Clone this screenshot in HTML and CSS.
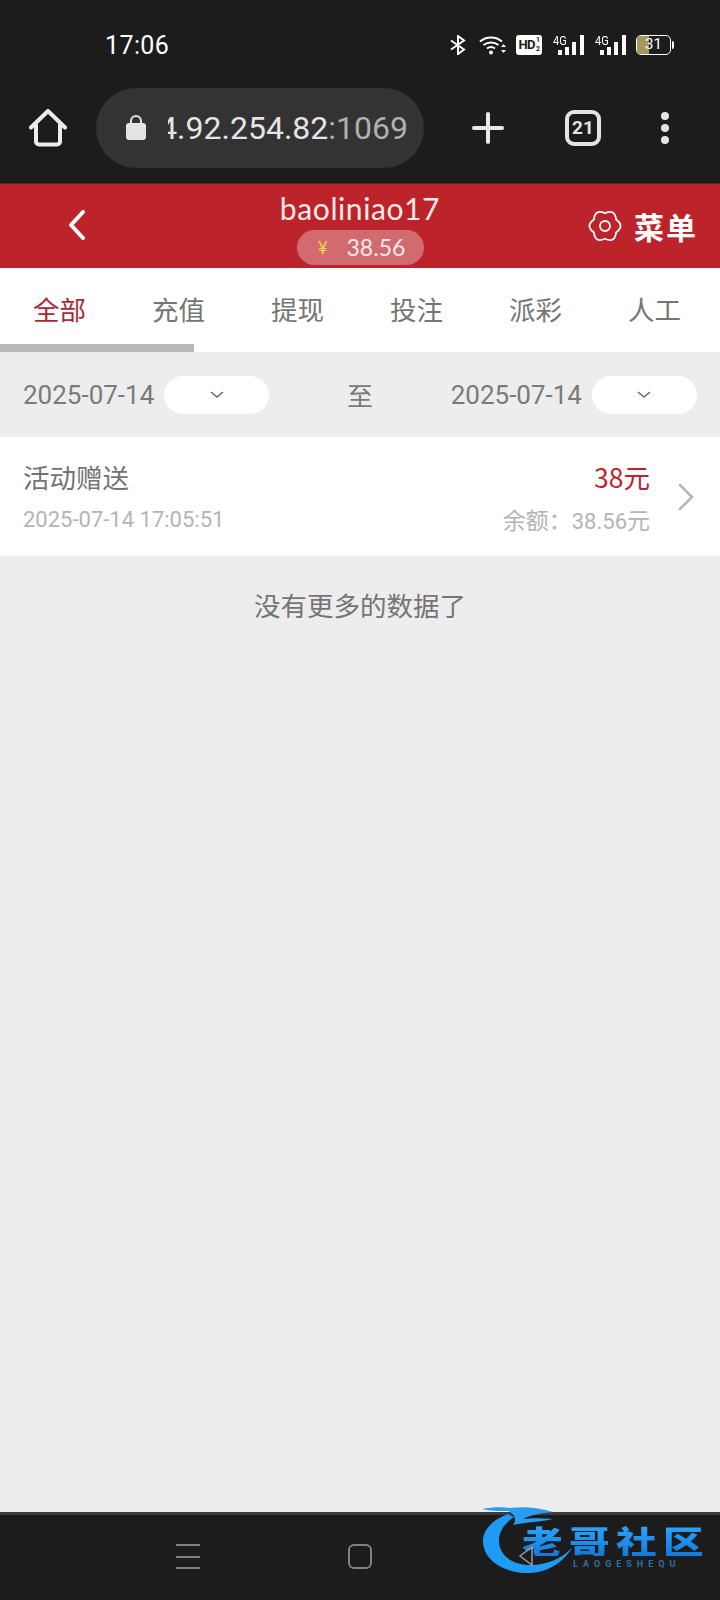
FILE: index.html
```html
<!DOCTYPE html>
<html lang="zh">
<head>
<meta charset="utf-8">
<title>账变记录</title>
<link rel="stylesheet" href="styles.css">
</head>
<body>
<div class="screen">
  <div class="chrome">
    <div class="status">
      <span class="clock">17:06</span>
      <div class="status-icons">
        <svg class="ic" width="16" height="20" viewBox="0 0 16 20" fill="none" stroke="#fff" stroke-width="2"><path d="M1 5.500 14 14.500 8 19V1l6 4.500L1 14.500"/></svg>
        <svg class="ic wifi" width="27" height="20" viewBox="0 0 27 20" fill="none" stroke="#fff" stroke-width="2"><path d="M1 6.500C7 1 17 1 23 6.500M4.500 10C9 6.500 15 6.500 19.500 10M8 13.500c2.500-1.800 5.500-1.800 8 0"/><circle cx="12" cy="17.500" r="2" fill="#fff" stroke="none"/><path d="m22 12 2.500-3 2.500 3zm0 3h5l-2.500 3z" fill="#fff" stroke="none"/></svg>
        <div class="hd"><span>HD</span><span class="hd-frac">1<br>2</span></div>
        <div class="sig"><span class="sig-t">4G</span><i class="b1"></i><i class="b2"></i><i class="b3"></i><i class="b4"></i></div>
        <div class="sig"><span class="sig-t">4G</span><i class="b1"></i><i class="b2"></i><i class="b3"></i><i class="b4"></i></div>
        <div class="batt"><div class="batt-body"><div class="batt-fill"></div><span class="batt-num">31</span></div><div class="batt-cap"></div></div>
      </div>
    </div>
    <div class="toolbar">
      <svg class="home" width="38" height="38" viewBox="0 0 38 38" fill="none" stroke="#ececec" stroke-width="4" stroke-linejoin="round" stroke-linecap="round"><path d="M2 18.500 19 2l17 16.500M7 16v16.500a3 3 0 0 0 3 3h18a3 3 0 0 0 3-3V16"/></svg>
      <div class="url">
        <svg width="20" height="28" viewBox="0 0 20 28"><path d="M5 11V7a5 5 0 0 1 10 0v4" fill="none" stroke="#e4e4e4" stroke-width="2"/><rect y="9" width="20" height="17" rx="3" fill="#e4e4e4"/></svg>
        <div class="url-clip"><span class="url-text"><span class="url-host">114.92.254.82</span>:1069</span></div>
      </div>
      <svg class="plus" width="32" height="32" viewBox="0 0 32 32" stroke="#e8e8e8" stroke-width="4" stroke-linecap="round"><path d="M16 2v28M2 16h28"/></svg>
      <div class="tabs-count">21</div>
      <div class="dots"><i></i><i></i><i></i></div>
    </div>
  </div>

  <header class="head">
    <svg class="back" width="18" height="30" viewBox="0 0 18 30" fill="none" stroke="#fff" stroke-width="4" stroke-linecap="round" stroke-linejoin="round"><path d="M15 2 3 15l12 13"/></svg>
    <div class="who">
      <div class="name">baoliniao17</div>
      <div class="money"><span class="yen">¥</span><span>38.56</span></div>
    </div>
    <div class="menu">
      <svg class="gear" width="32" height="32" viewBox="0 0 32 32" fill="none" stroke="#fff" stroke-width="1.800"><path d="M16 3.200Q26-1.320 27.080 9.600 36 16 27.080 22.400 26 33.320 16 28.800 6 33.320 4.920 22.400-4 16 4.920 9.600 6-1.320 16 3.200z"/><circle cx="16" cy="16" r="5"/></svg>
      <span>菜单</span>
    </div>
  </header>

  <nav class="tabs">
    <a class="tab on">全部</a>
    <a class="tab">充值</a>
    <a class="tab">提现</a>
    <a class="tab">投注</a>
    <a class="tab">派彩</a>
    <a class="tab">人工</a>
    <div class="tab-line"></div>
  </nav>

  <div class="filter">
    <div class="date"><span>2025-07-14</span><div class="pick"><svg width="14" height="8" viewBox="0 0 14 8" fill="none" stroke="#666" stroke-width="1.500"><path d="m1 1 6 5 6-5"/></svg></div></div>
    <span class="to">至</span>
    <div class="date"><span>2025-07-14</span><div class="pick"><svg width="14" height="8" viewBox="0 0 14 8" fill="none" stroke="#666" stroke-width="1.500"><path d="m1 1 6 5 6-5"/></svg></div></div>
  </div>

  <div class="row">
    <div class="row-main">
      <div class="line"><span class="title">活动赠送</span><span class="amount">38元</span></div>
      <div class="line"><span class="stamp">2025-07-14 17:05:51</span><span class="balance">余额：<b class="digits">38.56</b>元</span></div>
    </div>
    <svg class="chev" width="16" height="28" viewBox="0 0 16 28" fill="none" stroke="#b5b5b5" stroke-width="2.500" stroke-linecap="round"><path d="m2 2 12 12L2 26"/></svg>
  </div>

  <p class="end">没有更多的数据了</p>

  <footer class="navbar">
    <div class="burger"><i></i><i></i><i></i></div>
    <div class="square"></div>
    <div class="logo">
      <svg class="logo-ring" width="92" height="72" viewBox="0 0 92 72"><path d="M26 11C10 17 1 27 1 38c0 20 23 33 47 32 20-1 34-12 42-25-10 10-24 17-42 17-18 0-31-10-31-24 0-10 6-18 15-24z" fill="#1d9bf5"/><path d="M0 6c10-2 20-2 28-1 14-2 30 0 43 4-12 1-22 3-30 7 8-1 18-1 30 0-12 3-26 3-40 6 4-5 2-11-5-14C16 8 8 8 0 6z" fill="#2a9df0"/></svg>
      <div class="logo-cn">老哥社区</div>
      <div class="logo-en">LAOGESHEQU</div>
    </div>
    <svg class="tri" width="24" height="24" viewBox="0 0 24 24" fill="none" stroke="#9a9a9a" stroke-width="1.500"><path d="M1 12 13 3v18z"/></svg>
  </footer>
</div>
</body>
</html>
```
FILE: styles.css
```css
* { box-sizing: border-box; }
html, body { margin: 0; padding: 0; }
body { font-family: "Noto Sans CJK SC", "Roboto", sans-serif; background: #ededed; }
.screen { width: 720px; height: 1600px; display: flex; flex-direction: column; overflow: hidden; background: #ededed; }

.chrome { height: 184px; background: #1c1c1c; flex: none; border-bottom: 1px solid #4a2a2a; }
.status { height: 88px; display: flex; align-items: center; justify-content: space-between; padding: 2px 46px 0 105px; }
.clock { font: 25px "Roboto", sans-serif; color: #fff; letter-spacing: .4px; }
.status-icons { display: flex; align-items: center; gap: 10px; }
.ic { display: block; }
.wifi { margin-left: 3px; }
.hd { width: 26px; height: 20px; background: #fff; border-radius: 3px; color: #1c1c1c; font: 700 13px/20px "Roboto", sans-serif; display: flex; justify-content: center; letter-spacing: -.5px; }
.hd-frac { font-size: 7px; line-height: 9px; padding: 1px 0 0 1px; }
.sig { position: relative; width: 30px; height: 20px; margin-left: 2px; }
.sig-t { position: absolute; left: -1px; top: -1px; color: #fff; font: 13px/13px "Roboto", sans-serif; transform: scaleX(.85); transform-origin: left; }
.sig i { position: absolute; bottom: 0; width: 4px; background: #fff; }
.b1 { left: 4px; height: 5px; }
.b2 { left: 11px; height: 8px; }
.b3 { left: 18px; height: 13px; }
.b4 { left: 26px; height: 20px; }
.batt { display: flex; align-items: center; }
.batt-body { position: relative; width: 35px; height: 20px; border: 1.500px solid #fff; border-radius: 5px; overflow: hidden; }
.batt-fill { width: 12px; height: 100%; background: #a8975c; }
.batt-num { position: absolute; left: 8px; top: 0; font: 15px/17px "Roboto", sans-serif; color: #fff; }
.batt-cap { width: 2px; height: 8px; background: #fff; margin-left: 1px; border-radius: 0 2px 2px 0; }

.toolbar { height: 96px; display: flex; align-items: center; padding-bottom: 16px; }
.home { margin-left: 29px; flex: none; }
.url { margin-left: 29px; width: 328px; height: 80px; border-radius: 40px; background: #333; display: flex; align-items: center; padding-left: 30px; flex: none; }
.url-clip { width: 240px; margin-left: 22px; overflow: hidden; direction: rtl; white-space: nowrap; }
.url-text { direction: ltr; unicode-bidi: bidi-override; display: inline-block; font: 32px/40px "Roboto", sans-serif; color: #b0b0b0; }
.url-host { color: #e4e4e4; }
.plus { margin-left: 48px; flex: none; }
.tabs-count { margin-left: 61px; width: 36px; height: 36px; flex: none; border: 4px solid #e4e4e4; border-radius: 9px; color: #e4e4e4; font: 700 19px/28px "Roboto", sans-serif; text-align: center; }
.dots { margin-left: 60px; display: flex; flex-direction: column; gap: 4px; }
.dots i { width: 8px; height: 8px; background: #e4e4e4; border-radius: 50%; }

.head { height: 84px; flex: none; background: #bd232b; display: flex; align-items: center; position: relative; color: #fff; }
.back { margin-left: 68px; margin-top: -2px; flex: none; }
.who { position: absolute; left: 0; right: 0; top: 2px; display: flex; flex-direction: column; align-items: center; }
.name { font: 30px/44px "Lato", sans-serif; color: #fbeaea; letter-spacing: .6px; }
.money { height: 35px; width: 127px; border-radius: 18px; background: rgba(255,255,255,.33); display: flex; align-items: center; justify-content: center; gap: 19px; padding-left: 3px; font: 23px/35px "Lato", sans-serif; color: #f8eaea; }
.yen { color: #ffd83d; font-size: 17px; }
.menu { margin-left: auto; margin-right: 22px; display: flex; align-items: center; gap: 13px; margin-top: -1px; font-size: 30px; font-weight: 700; letter-spacing: 2px; }
.gear { overflow: visible; }

.tabs { height: 84px; flex: none; background: #fff; display: flex; position: relative; }
.tab { width: 119px; text-align: center; font-size: 26.500px; line-height: 82px; color: #757575; }
.tab.on { color: #a72a33; }
.tab-line { position: absolute; left: 0; bottom: 0; width: 194px; height: 8px; background: #b9b9b9; }

.filter { height: 85px; flex: none; display: flex; align-items: center; justify-content: space-between; padding: 0 23px; font-size: 26px; color: #7a7a7a; }
.date { display: flex; align-items: center; gap: 10px; }
.date span { font: 26px "Roboto", sans-serif; }
.pick { width: 105px; height: 38px; background: #fff; border-radius: 19px; display: flex; align-items: center; justify-content: center; }

.row { height: 119px; flex: none; background: #fff; display: flex; align-items: center; padding: 0 26px 0 23px; }
.row-main { flex: 1; min-width: 0; display: flex; flex-direction: column; gap: 7px; padding-right: 28px; margin-top: 2px; }
.line { display: flex; justify-content: space-between; align-items: center; }
.title { font-size: 26.500px; line-height: 38px; color: #737373; }
.amount { font-size: 26.500px; line-height: 38px; color: #bd232b; }
.stamp { font: 22px/32px "Roboto", sans-serif; color: #b4b4b4; }
.balance { font-size: 23px; line-height: 32px; color: #b4b4b4; }
.digits { font: 22px/32px "Roboto", sans-serif; }
.chev { flex: none; }

.end { margin: 29px 0 0; text-align: center; font-size: 26.500px; line-height: 40px; color: #757575; flex: 1; }

.navbar { height: 88px; flex: none; background: #1c1c1c; border-top: 3px solid #3c3c3c; position: relative; display: flex; align-items: center; }
.burger { position: absolute; left: 176px; top: 29px; width: 24px; height: 25px; display: flex; flex-direction: column; justify-content: space-between; }
.burger i { height: 2px; background: #808080; }
.square { position: absolute; left: 348px; top: 29px; width: 24px; height: 25px; border: 2px solid #808080; border-radius: 6px; }
.tri { position: absolute; left: 519px; top: 29px; }
.logo { position: absolute; left: 482px; top: -12px; width: 228px; height: 80px; }
.logo-ring { position: absolute; left: 0; top: 0; overflow: visible; }
.logo-cn { position: absolute; left: 40px; top: 21px; font-size: 32px; line-height: 32px; font-weight: 900; letter-spacing: 5px; white-space: nowrap; transform: scaleX(1.27); transform-origin: left; background: linear-gradient(#2aa8ff, #1478d8); -webkit-background-clip: text; background-clip: text; color: transparent; }
.logo-en { position: absolute; left: 91px; top: 56px; font: 700 9px/10px "Roboto", sans-serif; letter-spacing: 5px; color: #2f6fa8; white-space: nowrap; }
```
